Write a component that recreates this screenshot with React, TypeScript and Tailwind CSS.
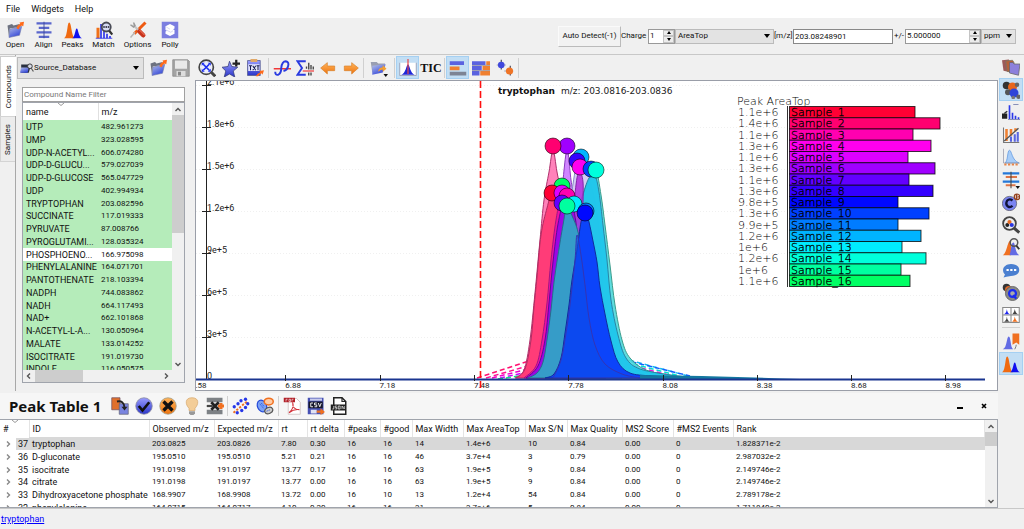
import { useState } from "react";
import type { ReactNode } from "react";
import clsx from "clsx";

const compounds = [
  ["UTP", "482.961273"],
  ["UMP", "323.028595"],
  ["UDP-N-ACETYL...", "606.074280"],
  ["UDP-D-GLUCU...", "579.027039"],
  ["UDP-D-GLUCOSE", "565.047729"],
  ["UDP", "402.994934"],
  ["TRYPTOPHAN", "203.082596"],
  ["SUCCINATE", "117.019333"],
  ["PYRUVATE", "87.008766"],
  ["PYROGLUTAMI...", "128.035324"],
  ["PHOSPHOENO...", "166.975098"],
  ["PHENYLALANINE", "164.071701"],
  ["PANTOTHENATE", "218.103394"],
  ["NADPH", "744.083862"],
  ["NADH", "664.117493"],
  ["NAD+", "662.101868"],
  ["N-ACETYL-L-A...", "130.050964"],
  ["MALATE", "133.014252"],
  ["ISOCITRATE", "191.019730"],
  ["INDOLE", "116.050575"],
];

const peakColumns = [
  { name: "#", width: "w-[29px]" },
  { name: "ID", width: "w-[120px]" },
  { name: "Observed m/z", width: "w-[65px]" },
  { name: "Expected m/z", width: "w-[64px]" },
  { name: "rt", width: "w-[29px]" },
  { name: "rt delta", width: "w-[37px]" },
  { name: "#peaks", width: "w-[36px]" },
  { name: "#good", width: "w-[32px]" },
  { name: "Max Width", width: "w-[51px]" },
  { name: "Max AreaTop", width: "w-[62px]" },
  { name: "Max S/N", width: "w-[42px]" },
  { name: "Max Quality", width: "w-[55px]" },
  { name: "MS2 Score", width: "w-[51px]" },
  { name: "#MS2 Events", width: "w-[60px]" },
  { name: "Rank", width: "" },
];

const peakRows = [
  ["37", "tryptophan", "203.0825", "203.0826", "7.80", "0.30", "16", "16", "14", "1.4e+6", "10", "0.84", "0.00", "0", "1.828371e-2"],
  ["36", "D-gluconate", "195.0510", "195.0510", "5.21", "0.21", "16", "16", "46", "3.7e+4", "3", "0.79", "0.00", "0", "2.987032e-2"],
  ["35", "isocitrate", "191.0198", "191.0197", "13.77", "0.17", "16", "16", "63", "1.9e+5", "9", "0.84", "0.00", "0", "2.149746e-2"],
  ["34", "citrate", "191.0198", "191.0197", "13.77", "0.00", "16", "16", "63", "1.9e+5", "9", "0.84", "0.00", "0", "2.149746e-2"],
  ["33", "Dihydroxyacetone phosphate", "168.9907", "168.9908", "13.72", "0.00", "16", "10", "13", "1.2e+4", "54", "0.84", "0.00", "0", "2.789178e-2"],
  ["32", "phenylalanine", "164.0715", "164.0717", "4.10", "0.20", "16", "16", "31", "3.7e+6", "5", "0.84", "0.00", "0", "1.711840e-2"],
];

const samples = [
  { area: "1.1e+6", end: 915, color: "#ff0034" },
  { area: "1.4e+6", end: 940, color: "#ff0070" },
  { area: "1.1e+6", end: 913, color: "#ff00b0" },
  { area: "1.3e+6", end: 931, color: "#ff00ee" },
  { area: "1.1e+6", end: 908, color: "#de00ff" },
  { area: "1.3e+6", end: 935, color: "#a000ff" },
  { area: "1.1e+6", end: 909, color: "#6400ff" },
  { area: "1.3e+6", end: 933, color: "#3400ff" },
  { area: "9.8e+5", end: 898, color: "#0008ff" },
  { area: "1.3e+6", end: 929, color: "#0040ff" },
  { area: "9.9e+5", end: 898, color: "#007cff" },
  { area: "1.2e+6", end: 921, color: "#00b4ff" },
  { area: "1e+6", end: 902, color: "#00ecff" },
  { area: "1.2e+6", end: 926, color: "#00ffdc" },
  { area: "1e+6", end: 901, color: "#00ffa0" },
  { area: "1.1e+6", end: 910, color: "#00ff64" },
];

/* ---------- icons ---------- */

function Icon({ children, size = "size-[18px]" }: { children: ReactNode; size?: string }) {
  return (
    <svg viewBox="0 0 24 24" className={clsx(size, "shrink-0")} fill="none" aria-hidden="true">
      {children}
    </svg>
  );
}

function Gradients() {
  return (
    <svg className="absolute size-0" aria-hidden="true">
      <defs>
        <linearGradient id="blue" x1="0" y1="0" x2="0" y2="1">
          <stop offset="0" stopColor="#9a9dff" />
          <stop offset="1" stopColor="#2a35c8" />
        </linearGradient>
        <linearGradient id="folder" x1="0" y1="0" x2="0.6" y2="1">
          <stop offset="0" stopColor="#b9c4ea" />
          <stop offset="1" stopColor="#3346d8" />
        </linearGradient>
        <linearGradient id="orange" x1="0" y1="0" x2="0" y2="1">
          <stop offset="0" stopColor="#ffb45a" />
          <stop offset="1" stopColor="#ee7410" />
        </linearGradient>
      </defs>
    </svg>
  );
}

const FolderOpen = () => (
  <>
    <path d="M2 6l6-2 2 2 8-2v4L5 10 4 21z" fill="#6d7280" />
    <path d="M5 11l16-4-3 12L4 22z" fill="url(#folder)" stroke="#7078a8" strokeWidth=".8" />
    <path d="M14 10q1-5 5-6l-1-2 6-1-1 6-2-1q-3 1-4 5z" fill="#ff6a1a" />
  </>
);

const Align = () => (
  <>
    <path d="M2 3h20M5 9h14M2 15h20M5 21h14" stroke="#5a66cc" strokeWidth="3" />
    <path d="M12 1v22" stroke="#3c4898" strokeWidth="1.2" />
  </>
);

const Peaks = () => (
  <>
    <path d="M0 23c5-2 4-21 7-21s3 20 8 21z" fill="#f06a10" />
    <path d="M11 23c4-2 4-13 6-13s2 11 7 13z" fill="#1010f0" />
  </>
);

const Match = () => (
  <>
    <path d="M2 23V9h4v14z" fill="#f07018" />
    <path d="M8 23V4M12 23V11M16 23v-6M20 23v-3" stroke="#1a22e8" strokeWidth="2" />
    <path d="M1 23h22" stroke="#1a22e8" />
    <circle cx="15" cy="8" r="6" fill="#d6dbf2" stroke="#484a55" strokeWidth="2.4" />
    <path d="M19 13l4 5" stroke="#333" strokeWidth="3" />
    <path d="M11 8h8" stroke="#445" strokeWidth="2.4" strokeDasharray="2 1" />
  </>
);

const Options = () => (
  <>
    <path d="M22 2L7 17" stroke="#ee5a12" strokeWidth="4" />
    <path d="M8 15l-6 7" stroke="#b8b8b8" strokeWidth="2" />
    <path d="M5 5l11 10" stroke="#c4c4c4" strokeWidth="3" />
    <path d="M2 5l4 3 2-2-2-4" stroke="#9a9a9a" strokeWidth="2" />
    <path d="M14 14l5 5" stroke="#c8331c" strokeWidth="6" strokeLinecap="round" />
    <path d="M14 12l7 7" stroke="#f58a70" strokeWidth="1.2" />
  </>
);

const Polly = () => (
  <>
    <path d="M1 1h22v22H1z" fill="#7b7ee0" />
    <path d="M12 4l6 3v3l-2 1 2 1v5l-6 3-6-3v-3l2-1-2-1V7z" fill="#fff" />
    <path d="M7 12l6 3 3-2M7 8l5 3" stroke="#c8c9f2" />
  </>
);

const Database = () => (
  <>
    <path d="M2 6h12l4 4-3 10H2z" fill="#29303f" />
    <path d="M2 11h13l-2 9H0z" fill="url(#folder)" />
    <circle cx="17" cy="9" r="4" fill="#d8dbe8" stroke="#333" strokeWidth="1.6" />
    <path d="M19 12l4 6" stroke="#555" strokeWidth="2" />
  </>
);

const Save = () => (
  <>
    <path d="M1 1h20l2 2v20H1z" fill="#a4a4a4" stroke="#888" />
    <path d="M4 2h16v11H4z" fill="#e9e9e9" />
    <path d="M6 16h12v7H6z" fill="#ddd" />
    <path d="M8 17h4v5H8z" fill="#888" />
  </>
);

const ZoomFit = () => (
  <>
    <circle cx="11" cy="11" r="9.500" fill="#eceefa" stroke="#444" strokeWidth="2.2" />
    <path d="M18 18l5 5" stroke="#444" strokeWidth="4" />
    <path d="M7 7l8 8M15 7l-8 8" stroke="#1a2cf0" strokeWidth="2.2" />
    <path d="M5 9V5h4zM13 5h4v4zM17 13v4h-4zM9 17H5v-4z" fill="#1a2cf0" />
  </>
);

const StarAdd = () => (
  <>
    <path d="M10 3l3 7 8 1-6 5 2 8-7-4-7 4 2-8-5-5 8-1z" fill="url(#blue)" stroke="#333a78" />
    <path d="M19 1v9M14 6h10" stroke="#222" strokeWidth="3" />
  </>
);

const CopyText = () => (
  <>
    <path d="M2 2h17v20H2z" fill="url(#blue)" stroke="#555b8c" />
    <path d="M6 0h9v4H6z" fill="#e0a868" />
    <path d="M3 7h15v9H3z" fill="#e8eafc" />
    <path d="M4 9h4M6 9v6M9 9l4 6M13 9l-4 6M14 9h4M16 9v6" stroke="#181c50" strokeWidth="1.4" />
    <path d="M13 23q2-4 6-5l-1-2 6-1-2 6-1-2q-3 1-5 4z" fill="#ff6a1a" />
  </>
);

const Smooth = () => (
  <>
    <path d="M1 13h23" stroke="#f03838" strokeWidth="2" />
    <path d="M3 17q0 5 4 4 4-2 4-9 1-9 6-9 5 1 3 7-1 5-6 6" stroke="#2a3be0" strokeWidth="2.6" />
  </>
);

const SumPeaks = () => (
  <>
    <path d="M13 3H2l6 9-6 9h11" stroke="#2a3be0" strokeWidth="2.6" />
    <path d="M9 16h15" stroke="#f03838" strokeWidth="1.6" />
    <path d="M14 13v-3M17 14V5M20 14V8M23 14V10M17 18v4M20 18v4" stroke="#444" strokeWidth="1.8" />
  </>
);

const ArrowLeft = () => <path d="M1 12l10-8v5h11v7H11v5z" fill="url(#orange)" stroke="#d88028" />;
const ArrowRight = () => <path d="M23 12L13 4v5H2v7h11v5z" fill="url(#orange)" stroke="#d88028" />;

const Export = () => (
  <>
    <path d="M1 4h8l2 2h9v5L3 18z" fill="#9a9fb2" />
    <path d="M3 9l18-2-4 11-14 3z" fill="url(#folder)" />
    <path d="M11 17q0-5 6-6V8l5 5-5 4v-3q-3 0-6 3z" fill="#f5a030" />
    <path d="M18 20h6l-3 4z" fill="#111" />
  </>
);

const IsotopePlot = () => (
  <>
    <path d="M1 5h22v17H1z" fill="#fff" />
    <path d="M3 21c6-1 7-14 9-14s3 13 9 14z" fill="#1f28d8" />
    <path d="M12 0v20" stroke="#e84848" strokeWidth="1.6" />
    <path d="M1 5v17h22V5" stroke="#8a8fa8" />
  </>
);

const BarBlocks = () => (
  <>
    <path d="M1 3h19v5H1z" fill="#5a62e0" />
    <path d="M1 10h13v5H1z" fill="#f08030" />
    <path d="M1 17h22v5H1z" fill="#7d8494" />
  </>
);

const StackBlocks = () => (
  <>
    <path d="M0 3h18v5H0zM0 9h13v6H0zM0 16h10v6H0z" fill="#5a62e0" />
    <path d="M19 3h5v5h-5zM14 9h10v6H14zM11 16h13v6H11z" fill="#f08030" />
    <path d="M0 8.500h24M0 15.500h24" stroke="#8a8a98" />
  </>
);

const Scatter = () => (
  <>
    <path d="M7 1v13M19 9v13" stroke="#334" strokeWidth="1.4" />
    <path d="M1 8h12M11 16h12" stroke="#889" strokeWidth="1" />
    <circle cx="7" cy="8" r="4.4" fill="#4048dd" />
    <circle cx="18" cy="16" r="4.8" fill="#ef7426" />
  </>
);

const Projects = () => (
  <>
    <path d="M0 3l9-1 2 3v14l-9-2z" fill="#9c5a58" />
    <path d="M5 4l9-1 2 3v13l-9-1z" fill="#b86038" stroke="#776" />
    <path d="M10 6h5l1 2h8l-2 15-12-3z" fill="#8c80dc" stroke="#666" />
  </>
);

const Molecules = () => (
  <>
    <circle cx="6" cy="6" r="5" fill="#333" />
    <circle cx="14" cy="8" r="6" fill="#e8661c" />
    <circle cx="20" cy="5" r="3" fill="#666" />
    <circle cx="8" cy="15" r="4" fill="#555" />
    <circle cx="16" cy="16" r="6" fill="#2f45d8" />
    <circle cx="22" cy="21" r="3" fill="#666" />
    <circle cx="15" cy="22" r="2.4" fill="#777" />
  </>
);

const Spectrum = () => (
  <>
    <path d="M10 22V3M14 22v-9M18 22v-5M22 22v-3" stroke="#2a38e8" strokeWidth="2.2" />
    <path d="M0 14h7v7H0z" fill="#222" />
    <path d="M3 14l4-3" stroke="#333" strokeWidth="2" />
    <path d="M15 2h7M8 22h16" stroke="#8890b8" strokeWidth="1.4" />
  </>
);

const Calibration = () => (
  <>
    <path d="M2 2v20h21" stroke="#777" strokeWidth="1.4" />
    <path d="M6 4v16M12 4v9M18 3v4" stroke="#f08030" strokeWidth="3.4" />
    <path d="M12 14v7M17 11v10M21 8v13" stroke="#5a66e0" strokeWidth="2.8" />
    <path d="M3 20L22 3" stroke="#555" strokeWidth="1.8" />
  </>
);

const Gauss = () => (
  <>
    <path d="M4 20C8 18 7 3 10 3s3 14 13 17z" fill="#a8cdf8" stroke="#5f98e0" />
    <path d="M2 1v19h21" stroke="#99a" />
    <path d="M3 22h20" stroke="#e8864a" strokeWidth="2.4" strokeDasharray="3 2" />
  </>
);

const AlignRows = () => (
  <>
    <path d="M1 3h22M1 14h22" stroke="#2578d8" strokeWidth="3" />
    <path d="M5 8h15M5 19h13" stroke="#dd7548" strokeWidth="2.6" />
    <path d="M12 1v22" stroke="#444" strokeWidth="1.4" />
    <path d="M18 20h6l-3 4z" fill="#111" />
  </>
);

const Carbon = () => (
  <>
    <circle cx="10" cy="14" r="9.500" fill="#7a84f2" stroke="#556" />
    <path d="M14 10q-4-3-7 0-3 5 1 8 3 2 6-1" stroke="#10133a" strokeWidth="3.2" />
    <circle cx="20" cy="5" r="4.5" fill="#94401c" />
    <path d="M18 3v4M20 3h2l-1 2 1 2h-2" stroke="#fff" strokeWidth=".9" />
  </>
);

const SearchPeaks = () => (
  <>
    <circle cx="10" cy="10" r="8.500" fill="#eee" stroke="#444" strokeWidth="2.4" />
    <path d="M16 16l7 6" stroke="#444" strokeWidth="4" />
    <circle cx="7" cy="12" r="2.6" fill="#222" />
    <circle cx="10" cy="8" r="2.8" fill="#e86a20" />
    <circle cx="13" cy="12" r="2.8" fill="#2a36e0" />
  </>
);

const PeakSearch = () => (
  <>
    <path d="M1 23C7 20 7 3 12 3v20z" fill="#f07020" />
    <path d="M10 23c2-4 2-17 5-17s2 14 8 17z" fill="#626be4" />
    <circle cx="16" cy="6" r="5" stroke="#555" strokeWidth="2" />
    <path d="M19 10l4 5" stroke="#333" strokeWidth="2.6" />
  </>
);

const Chat = () => (
  <>
    <path d="M12 4c7 0 11 3 11 8s-5 8-11 8l-6 1-4 1 2-4C-2 12 3 4 12 4z" fill="#4a7fd0" />
    <path d="M6 12h3M11 12h3M16 12h3" stroke="#fff" strokeWidth="2.4" />
  </>
);

const Quantum = () => (
  <>
    <circle cx="6" cy="6" r="5" fill="#333" />
    <circle cx="9" cy="9" r="5" fill="#dd6828" />
    <circle cx="14" cy="14" r="9.4" fill="#888" stroke="#555" />
    <circle cx="14" cy="14" r="4.6" stroke="#1c2cf0" strokeWidth="3" fill="#aaa" />
    <path d="M15 16l4 5" stroke="#1c2cf0" strokeWidth="3" />
  </>
);

const PeakGrid = () => (
  <>
    <path d="M1 2h22v20H1zM12 2v20M1 12h22" stroke="#888" strokeWidth="1.4" fill="#fff" />
    <path d="M2 11q4-1 4.500-7Q7 10 11 11z" fill="#2028f0" />
    <path d="M13 11q3-1 4-7 1 6 5 7zM2 21q4-1 4.500-7Q7 20 11 21z" fill="#444" />
    <path d="M13 21q3-1 4-7 1 6 5 7z" fill="#f07020" />
  </>
);

const PeakMark = () => (
  <>
    <path d="M1 23c6-2 5-17 8-17s2 15 6 17z" fill="#626be4" />
    <path d="M14 2h9v15l-4-3-5 3z" fill="#f07020" />
    <path d="M17 23q2-4 2-6" stroke="#555" />
  </>
);

const MovePeak = () => (
  <>
    <path d="M1 1h11v16H1z" fill="#e0702c" stroke="#705060" />
    <path d="M11 9h12v14H11z" fill="#7a85e0" stroke="#667" />
    <path d="M8 6q9-2 10 8" stroke="#222" strokeWidth="2.4" />
    <path d="M14 13h8l-4 5z" fill="#222" />
  </>
);

const Good = () => (
  <>
    <circle cx="12" cy="12" r="11" fill="url(#blue)" stroke="#889" />
    <path d="M5 12l5 6 9-11" stroke="#111" strokeWidth="3.6" />
  </>
);

const Bad = () => (
  <>
    <circle cx="12" cy="12" r="11" fill="url(#orange)" stroke="#998" />
    <path d="M6 6l12 12M18 6L6 18" stroke="#111" strokeWidth="4.4" />
  </>
);

const Bulb = () => (
  <>
    <path d="M12 1c-10 0-9 9-4 14v3h8v-3c5-5 6-14-4-14z" fill="#f3cd98" stroke="#d8ab72" />
    <path d="M8 19h8v3l-2 2h-4l-2-2z" fill="#999" />
  </>
);

const DeletePeak = () => (
  <>
    <path d="M1 1h21v6H1zM1 17h21v6H1z" fill="#7d8185" />
    <path d="M1 12h8" stroke="#444" strokeWidth="3" />
    <path d="M16 12h8M20 8v8" stroke="#f07020" strokeWidth="4" />
    <path d="M7 7l10 10M17 7L7 17" stroke="#222" strokeWidth="3.6" />
  </>
);

const ScatterBlue = () => (
  <>
    <path d="M2 21L20 6" stroke="#f07020" strokeWidth="2.600" strokeDasharray="3 2" />
    <g fill="#2636e8">
      <circle cx="3" cy="13" r="2.200" />
      <circle cx="8" cy="9" r="2.200" />
      <circle cx="12" cy="5" r="2.200" />
      <circle cx="18" cy="3" r="2.200" />
      <circle cx="21" cy="9" r="2.200" />
      <circle cx="18" cy="14" r="2.200" />
      <circle cx="13" cy="18" r="2.200" />
      <circle cx="7" cy="21" r="2.200" />
    </g>
  </>
);

const Clusters = () => (
  <>
    <ellipse cx="8" cy="12" rx="6" ry="8" transform="rotate(-25 8 12)" fill="#7ca2f4" stroke="#2348d8" strokeWidth="1.6" />
    <ellipse cx="17" cy="6" rx="6" ry="4.500" fill="#ffcba4" stroke="#f07020" strokeWidth="2" />
    <ellipse cx="17" cy="18" rx="5.500" ry="4" transform="rotate(-25 17 18)" fill="#ccc" stroke="#555" strokeWidth="1.6" />
    <path d="M5 9l5 6M7 8l4 5M14 19l5-2" stroke="#2348d8" strokeDasharray="2 1" />
  </>
);

const Pdf = () => (
  <>
    <path d="M7 2h11l5 5v16H7z" fill="#fff" stroke="#c8b8b8" />
    <path d="M1 1h15v6H1z" fill="#b22028" />
    <path d="M4 3v3M4 3h2M8 3v3h2V3zM12 3v3M12 3h2" stroke="#fff" strokeWidth=".8" />
    <path d="M8 21c4-3 7-9 5-13-1 6 4 9 9 9-5-1-10 1-14 4z" stroke="#d4323a" strokeWidth="1.4" />
  </>
);

const Csv = () => (
  <>
    <path d="M1 1h21v22H1z" fill="#4650b4" />
    <path d="M4 2h16v3H4z" fill="#c9ccec" />
    <path d="M2 6h19v9H2z" fill="#16182c" />
    <path d="M8 8H5v5h3M13 8h-3v2.500h3V13h-3M15 8l2 5 2-5" stroke="#fff" strokeWidth="1.2" />
    <path d="M5 17h8v5H5z" fill="#dfe1f4" />
    <path d="M13 18h5v-3l6 5-6 4v-3h-5z" fill="#f07020" />
  </>
);

const Json = () => (
  <>
    <path d="M5 1h11l5 5v17H5z" fill="#fff" stroke="#222" strokeWidth="2" />
    <path d="M16 1v5h5" stroke="#222" strokeWidth="1.6" />
    <path d="M1 10h20v8H1z" fill="#222" />
    <path d="M5 12v4H3M9 12H7v2h2v2H7M11 12h2.500v4H11zM16 16v-4l3 4v-4" stroke="#fff" strokeWidth=".9" />
  </>
);

/* ---------- small controls ---------- */

function ToolButton({ label, width = "w-6", active, children }: { label: string; width?: string; active?: boolean; children: ReactNode }) {
  return (
    <button
      aria-label={label}
      className={clsx(
        "flex h-[23px] shrink-0 items-center justify-center border",
        width,
        active ? "border-[#a5d0f2] bg-[#c2def4]" : "border-transparent"
      )}
    >
      {children}
    </button>
  );
}

function Divider() {
  return <span className="mx-px h-5 w-px shrink-0 bg-[#d0d0d0]" />;
}

function Caret() {
  return (
    <svg viewBox="0 0 6 4" className="pointer-events-none absolute right-1 top-1/2 h-1 w-1.5 -translate-y-1/2">
      <path d="M0 0h6L3 4z" fill="#000" />
    </svg>
  );
}

function Spinner() {
  return (
    <span className="flex w-[11px] flex-col bg-[#ececec]">
      <button aria-label="Increase" className="flex flex-1 items-center justify-center border border-[#c4c4c4]">
        <svg viewBox="0 0 4 3" className="h-[3px] w-1"><path d="M0 3h4L2 0z" /></svg>
      </button>
      <button aria-label="Decrease" className="flex flex-1 items-center justify-center border border-[#c4c4c4]">
        <svg viewBox="0 0 4 3" className="h-[3px] w-1"><path d="M0 0h4L2 3z" /></svg>
      </button>
    </span>
  );
}

function Chevron({ d, color = "#555" }: { d: string; color?: string }) {
  return (
    <svg viewBox="0 0 12 12" className="size-3 shrink-0" fill="none">
      <path d={d} stroke={color} strokeWidth="1.4" />
    </svg>
  );
}

const UP = "M3.500 8L6 5.500 8.500 8";
const DOWN = "M3.500 5L6 7.500 8.500 5";
const LEFT = "M7 3.500L4.500 6 7 8.500";
const RIGHT = "M5 3.500L7.500 6 5 8.500";

/* ---------- chromatogram ---------- */

type Point = [number, number];

// Catmull-Rom spline through the points
function curve(points: Point[]) {
  let d = `M${points[0][0]} ${points[0][1]}`;
  for (let i = 0; i < points.length - 1; i++) {
    const p0 = points[i - 1] ?? points[i];
    const p1 = points[i];
    const p2 = points[i + 1];
    const p3 = points[i + 2] ?? p2;
    d += `C${p1[0] + (p2[0] - p0[0]) / 6} ${p1[1] + (p2[1] - p0[1]) / 6} ${p2[0] - (p3[0] - p1[0]) / 6} ${p2[1] - (p3[1] - p1[1]) / 6} ${p2[0]} ${p2[1]}`;
  }
  return d + "Z";
}

const eics: { fill: string; stroke: string; opacity: number; points: Point[] }[] = [
  { fill: "#ff4d9c", stroke: "#b0306c", opacity: 0.7, points: [[515, 378], [524, 370], [530, 340], [535, 293], [540, 240], [544, 200], [549, 172], [553, 150], [557, 172], [562, 200], [567, 260], [575, 330], [590, 378]] },
  { fill: "#c466ff", stroke: "#8c3cc0", opacity: 0.8, points: [[530, 378], [541, 360], [550, 310], [557, 240], [562, 190], [567, 150], [571, 180], [574, 200], [580, 260], [590, 340], [606, 378]] },
  { fill: "#c8c0f0", stroke: "#8888c8", opacity: 0.8, points: [[555, 300], [568, 210], [572, 190], [577, 163], [583, 163], [590, 180], [600, 240], [606, 378]] },
  { fill: "#4cd8dc", stroke: "#3c9c8c", opacity: 0.9, points: [[566, 378], [574, 260], [580, 205], [590, 178], [596, 170], [601, 195], [605, 225], [610, 265], [615, 305], [622, 340], [630, 358], [646, 370], [670, 375], [700, 378]] },
  { fill: "#1cc4ec", stroke: "#2a84a4", opacity: 0.9, points: [[560, 378], [570, 290], [576, 225], [583, 195], [589, 178], [595, 176], [599, 192], [603, 225], [607, 260], [611, 300], [618, 335], [626, 358], [640, 369], [670, 375], [690, 378]] },
  { fill: "#b428dc", stroke: "#8424a8", opacity: 0.85, points: [[545, 378], [556, 320], [567, 240], [574, 200], [578, 174], [583, 182], [583, 230], [588, 300], [600, 378]] },
  { fill: "#ff3c78", stroke: "#b02c60", opacity: 1, points: [[516, 378], [525, 369], [531, 340], [534, 307], [537, 277], [541, 235], [547, 208], [552, 194], [558, 202], [562, 240], [568, 300], [580, 378]] },
  { fill: "#f00ea4", stroke: "#a01484", opacity: 1, points: [[524, 378], [536, 366], [542, 340], [547, 303], [551, 260], [556, 220], [562, 194], [567, 220], [570, 300], [576, 378]] },
  { fill: "#9c06e4", stroke: "#5c0c98", opacity: 1, points: [[526, 378], [538, 366], [545, 340], [549, 303], [553, 262], [558, 224], [564, 202], [572, 203], [578, 240], [582, 300], [592, 345], [606, 378]] },
  { fill: "#369cc8", stroke: "#24708c", opacity: 1, points: [[528, 378], [537, 373], [543, 362], [547, 340], [551, 310], [554, 282], [558, 255], [563, 225], [567, 207], [573, 218], [578, 232], [583, 258], [588, 300], [594, 340], [606, 368], [622, 378]] },
  { fill: "#0c44fa", stroke: "#102c9c", opacity: 1, points: [[545, 378], [554, 374], [561, 358], [565, 333], [569, 305], [572, 280], [577, 250], [581, 222], [585, 208], [589, 222], [593, 241], [597, 262], [600, 287], [605, 314], [611, 341], [618, 362], [630, 373], [653, 376], [700, 378]] },
  { fill: "#0e4ce8", stroke: "#3434b4", opacity: 0.6, points: [[553, 378], [561, 360], [566, 333], [570, 305], [575, 260], [577, 235], [581, 255], [585, 285], [589, 318], [595, 345], [605, 364], [622, 374], [640, 378]] },
];

// x, y, sample index, back to front
const markers: [number, number, number][] = [
  [567, 146, 5],
  [553, 146, 1],
  [581, 157, 11],
  [577, 161, 7],
  [580, 167, 3],
  [591, 169, 9],
  [596, 170, 13],
  [562, 186, 15],
  [552, 193, 0],
  [562, 193, 4],
  [567, 196, 2],
  [562, 203, 6],
  [574, 204, 12],
  [567, 206, 14],
  [586, 211, 10],
  [585, 213, 8],
];

const yTicks = [
  { y: 85, label: "2.1e+6" },
  { y: 127, label: "1.8e+6" },
  { y: 169, label: "1.5e+6" },
  { y: 211, label: "1.2e+6" },
  { y: 253, label: "9e+5" },
  { y: 295, label: "6e+5" },
  { y: 337, label: "3e+5" },
  { y: 379, label: "0" },
];

const xTicks = ["6.58", "6.88", "7.18", "7.48", "7.78", "8.08", "8.38", "8.68", "8.98"];

const tails = [
  { d: "M477 378L535 359", color: "#ff1070" },
  { d: "M486 378L538 363", color: "#ff1090" },
  { d: "M492 378L540 366", color: "#f000c8" },
  { d: "M500 378L542 369", color: "#d000ff" },
  { d: "M498 379L548 372", color: "#10e080" },
  { d: "M606 354L692 377", color: "#10b8f0" },
  { d: "M616 358L690 376", color: "#1060ff" },
  { d: "M610 358L680 376", color: "#00e0d0" },
  { d: "M618 362L676 377", color: "#e018e0" },
  { d: "M620 366L668 377", color: "#3858ff" },
];

function Chromatogram() {
  return (
    <svg viewBox="196 81 801 309" preserveAspectRatio="xMinYMin meet" className="h-full w-full">
      {tails.map((t) => (
        <path key={t.d} d={t.d} stroke={t.color} strokeWidth="1.500" strokeDasharray="5 3" fill="none" />
      ))}
      {yTicks.map((t) => (
        <g key={t.label}>
          <path d={`M196 ${t.y + 0.5}H985`} stroke="#f0f0f0" strokeDasharray="1 2" />
          <path d={`M202 ${t.y + 0.5}h9`} stroke="#222" />
          <text x="207" y={t.y} className="font-[Roboto] text-[9px]" fill="#222">{t.label}</text>
        </g>
      ))}
      <path d="M206.500 81V379" stroke="#222" />
      {eics.map((e, i) => (
        <path key={i} d={curve(e.points)} fill={e.fill} fillOpacity={e.opacity} stroke={e.stroke} strokeWidth="1" />
      ))}
      <path d="M640 375Q720 376 800 379H640z" fill="#1478a0" />
      <path d="M196 379.500H985" stroke="#1a3590" strokeWidth="2" />
      {xTicks.map((label, i) => (
        <g key={label}>
          {i > 0 && <path d={`M${Math.round(191 + i * 94.3) + 0.5} 375v6`} stroke="#222" />}
          <text x={191 + i * 94.3} y="388" className="font-[Roboto] text-[8px]" fill="#222">{label}</text>
        </g>
      ))}
      <path d="M480.500 81V388" stroke="#ff1010" strokeWidth="1.600" strokeDasharray="7 3" />
      {markers.map(([x, y, s]) => (
        <circle key={s} cx={x} cy={y} r="8" fill={samples[s].color} stroke="#000" strokeOpacity=".55" />
      ))}
      <text x="498" y="94" className="font-['DejaVu_Sans'] text-[9px] font-bold" fill="#111">tryptophan</text>
      <text x="561" y="94" className="font-['DejaVu_Sans'] text-[9px]" fill="#222">m/z: 203.0816-203.0836</text>
      <text x="737" y="105" className="font-['DejaVu_Sans'] text-[11px] font-extralight" fill="#000">Peak AreaTop</text>
      {samples.map((s, i) => (
        <g key={i} className="font-['DejaVu_Sans'] text-[11px] font-extralight" fill="#000">
          <rect x="789.500" y={106.5 + i * 11.25} width={s.end - 789.5} height="11.250" fill={s.color} stroke="#000" strokeOpacity=".75" />
          <text x="738" y={116 + i * 11.25}>{s.area}</text>
          <text x="791" y={116 + i * 11.25} stroke="#000" strokeWidth=".3">{`Sample_${i + 1}`}</text>
        </g>
      ))}
      <path d="M787.500 106V287" stroke="#333" />
    </svg>
  );
}

/* ---------- panels ---------- */

function MainToolbar() {
  const [mz, setMz] = useState("203.08248901");
  const [ppm, setPpm] = useState("5.000000");
  const [charge, setCharge] = useState("1");
  const actions = [
    { label: "Open", width: "w-[30px]", icon: <FolderOpen /> },
    { label: "Align", width: "w-[27px]", icon: <Align /> },
    { label: "Peaks", width: "w-[31px]", icon: <Peaks /> },
    { label: "Match", width: "w-[31px]", icon: <Match /> },
    { label: "Options", width: "w-[37px]", icon: <Options /> },
    { label: "Polly", width: "w-[28px]", icon: <Polly /> },
  ];
  return (
    <div className="flex h-[37px] items-center justify-between border-b border-[#c8c8c8] bg-[#f0f0f0] pr-2">
      <div className="flex">
        {actions.map((a) => (
          <button key={a.label} className={clsx("flex flex-col items-center leading-[12px]", a.width)}>
            <Icon>{a.icon}</Icon>
            {a.label}
          </button>
        ))}
      </div>
      <div className="flex items-center">
        <button className="h-[21px] w-[63px] border border-[#fafafa] border-r-[#bbb] border-b-[#bbb] bg-[#f2f2f2]">Auto Detect(-1)</button>
        <label htmlFor="charge" className="w-[27px]">Charge</label>
        <div className="flex h-[15px] w-[27px] border border-[#999] bg-white">
          <input id="charge" value={charge} onChange={(e) => setCharge(e.target.value)} className="min-w-0 flex-1 pl-px" />
          <Spinner />
        </div>
        <div className="relative flex">
          <select aria-label="Quant type" className="h-[15px] w-[99px] appearance-none border border-[#bbb] bg-[#e3e3e3] pl-0.5">
            <option>AreaTop</option>
          </select>
          <Caret />
        </div>
        <label htmlFor="mz" className="w-[19px]">[m/z]</label>
        <input id="mz" value={mz} onChange={(e) => setMz(e.target.value)} className="h-[15px] w-[100px] border border-[#888] bg-white pl-px" />
        <label htmlFor="ppm" className="w-3 text-center">+/-</label>
        <div className="flex h-[15px] w-[76px] border border-[#999] bg-white">
          <input id="ppm" value={ppm} onChange={(e) => setPpm(e.target.value)} className="min-w-0 flex-1 pl-px" />
          <Spinner />
        </div>
        <div className="relative flex">
          <select aria-label="Unit" className="h-[15px] w-[35px] appearance-none border border-[#bbb] bg-[#e3e3e3] pl-0.5">
            <option>ppm</option>
          </select>
          <Caret />
        </div>
      </div>
    </div>
  );
}

function CompoundsPanel() {
  const [filter, setFilter] = useState("");
  return (
    <div className="flex w-[195px] shrink-0">
      <div className="flex w-4 flex-col border-r border-[#a8a8a8] pt-px">
        <button className="h-[60px] w-4 border-t border-l border-[#ccc] bg-white [writing-mode:vertical-rl]">
          <span className="inline-block rotate-180">Compounds</span>
        </button>
        <button className="h-[46px] border border-r-0 border-[#d4d4d4] bg-[#ececec] [writing-mode:vertical-rl]">
          <span className="inline-block rotate-180">Samples</span>
        </button>
      </div>
      <div className="flex min-w-0 flex-1 flex-col pt-0.5">
        <div className="flex items-center gap-[5px] pl-px">
          <div className="relative flex h-[22px] w-[127px] items-center border border-[#bbb] bg-[#e2e2e2]">
            <span className="pointer-events-none absolute left-0.5"><Icon size="size-[14px]"><Database /></Icon></span>
            <select aria-label="Database" className="h-full w-full appearance-none pl-4">
              <option>Source_Database</option>
            </select>
            <Caret />
          </div>
          <button aria-label="Load compounds"><Icon><FolderOpen /></Icon></button>
          <button aria-label="Save compounds"><Icon><Save /></Icon></button>
        </div>
        <input
          aria-label="Compound Name Filter"
          placeholder="Compound Name Filter"
          value={filter}
          onChange={(e) => setFilter(e.target.value)}
          className="mt-2 mr-2.5 ml-1.5 h-[15px] shrink-0 border border-[#a0a0a0] bg-white pl-px placeholder:text-[#777]"
        />
        <div className="mr-2.5 mb-2 ml-1.5 flex min-h-0 flex-1 border border-[#a0a4ac] bg-white">
          <div className="flex min-w-0 flex-1 flex-col">
            <div className="relative min-h-0 flex-1 overflow-hidden">
              <table className="w-full table-fixed text-[9px] leading-[12px]">
                <thead>
                  <tr className="h-[17px] text-left">
                    <th className="w-[75px] border-r border-[#e0e0e0] pl-[3px] font-normal">name</th>
                    <th className="pl-[3px] font-normal">m/z</th>
                  </tr>
                </thead>
                <tbody>
                  {compounds.map(([name, mz]) => (
                    <tr key={name} className={clsx("h-[13px] nth-[4n]:h-3", name !== "PHOSPHOENO..." && "bg-[#b5ecba]")}>
                      <td className="whitespace-nowrap p-0 pl-[3px]">{name}</td>
                      <td className="p-0 pl-[3px] text-[8px]">{mz}</td>
                    </tr>
                  ))}
                </tbody>
              </table>
              <svg viewBox="0 0 6 3" className="absolute top-0 left-[35px] h-[3px] w-1.5" fill="none"><path d="M0 0l3 2.500L6 0" stroke="#999" /></svg>
            </div>
            <div className="flex h-3 items-center bg-[#f0f0f0]">
              <Chevron d={LEFT} />
              <span className="h-full w-12 bg-[#cdcdcd]" />
              <span className="flex-1" />
              <Chevron d={RIGHT} />
            </div>
          </div>
          <div className="flex w-3 flex-col bg-[#f0f0f0]">
            <Chevron d={UP} />
            <span className="h-[118px] bg-[#cdcdcd]" />
            <span className="flex-1" />
            <Chevron d={DOWN} />
            <span className="h-3" />
          </div>
        </div>
      </div>
    </div>
  );
}

function PlotPanel() {
  return (
    <div className="flex min-w-0 flex-1 flex-col">
      <div className="flex h-[25px] shrink-0 items-center">
        <ToolButton label="Reset zoom"><Icon><ZoomFit /></Icon></ToolButton>
        <ToolButton label="Bookmark"><Icon><StarAdd /></Icon></ToolButton>
        <ToolButton label="Copy as text"><Icon><CopyText /></Icon></ToolButton>
        <Divider />
        <ToolButton label="Smooth" width="w-[23px]"><Icon><Smooth /></Icon></ToolButton>
        <ToolButton label="Integrate" width="w-[23px]"><Icon><SumPeaks /></Icon></ToolButton>
        <ToolButton label="Previous" width="w-[23px]"><Icon size="size-4"><ArrowLeft /></Icon></ToolButton>
        <ToolButton label="Next" width="w-[23px]"><Icon size="size-4"><ArrowRight /></Icon></ToolButton>
        <Divider />
        <ToolButton label="Export" width="w-[28px]"><Icon><Export /></Icon></ToolButton>
        <Divider />
        <ToolButton label="Show isotope plot" width="w-[23px]" active><Icon><IsotopePlot /></Icon></ToolButton>
        <ToolButton label="Show TIC" width="w-[24px]"><span className="font-['Liberation_Serif'] text-xs font-bold">TIC</span></ToolButton>
        <Divider />
        <ToolButton label="Show bar plot" width="w-[23px]" active><Icon><BarBlocks /></Icon></ToolButton>
        <ToolButton label="Show isotope bars" width="w-[23px]"><Icon><StackBlocks /></Icon></ToolButton>
        <ToolButton label="Show box plot" width="w-[25px]"><Icon><Scatter /></Icon></ToolButton>
        <Divider />
      </div>
      <div className="min-h-0 flex-1 overflow-hidden border border-[#9a9ea8] bg-white">
        <Chromatogram />
      </div>
    </div>
  );
}

function PeakTable() {
  return (
    <section className="h-[117px] shrink-0 pt-0.5">
      <header className="flex h-[26px] items-center bg-[#f6f6f6] pl-[9px]">
        <h2 className="w-[99px] font-['Noto_Sans'] text-[15px] font-bold">Peak Table 1</h2>
        <div className="flex flex-1 items-center">
          <ToolButton label="Switch group"><Icon><MovePeak /></Icon></ToolButton>
          <ToolButton label="Mark good"><Icon><Good /></Icon></ToolButton>
          <ToolButton label="Mark bad"><Icon><Bad /></Icon></ToolButton>
          <ToolButton label="Unmark" width="w-[23px]"><Icon><Bulb /></Icon></ToolButton>
          <ToolButton label="Delete group" width="w-[23px]"><Icon><DeletePeak /></Icon></ToolButton>
          <Divider />
          <ToolButton label="Scatter plot"><Icon><ScatterBlue /></Icon></ToolButton>
          <ToolButton label="Cluster"><Icon><Clusters /></Icon></ToolButton>
          <Divider />
          <ToolButton label="Export PDF"><Icon><Pdf /></Icon></ToolButton>
          <ToolButton label="Export CSV" width="w-[23px]"><Icon><Csv /></Icon></ToolButton>
          <ToolButton label="Export JSON" width="w-[23px]"><Icon><Json /></Icon></ToolButton>
        </div>
        <button aria-label="Minimize" className="flex h-6 w-6 items-center justify-center">
          <svg viewBox="0 0 6 6" className="size-1.5"><path d="M0 4h6v2H0z" /></svg>
        </button>
        <button aria-label="Close" className="mr-0.5 flex h-6 w-6 items-center justify-center">
          <svg viewBox="0 0 6 6" className="size-1.5"><path d="M1 1l4 4M5 1L1 5" stroke="#000" strokeWidth="1.600" /></svg>
        </button>
      </header>
      <div className="flex h-[89px] border border-[#a0a4ac] border-l-0 bg-white">
        <div className="relative min-w-0 flex-1 overflow-hidden">
          <table className="w-full table-fixed text-[9px] leading-[12px]">
            <thead>
              <tr className="h-[17px] text-left">
                {peakColumns.map((c) => (
                  <th key={c.name} className={clsx("border-r border-[#e4e4e4] p-0 pl-[3px] font-normal whitespace-nowrap", c.width)}>{c.name}</th>
                ))}
              </tr>
            </thead>
            <tbody>
              {peakRows.map((row, r) => (
                <tr key={row[0]} className="h-[13px] nth-[4n]:h-3">
                  {row.map((cell, i) =>
                    i === 0 ? (
                      <td key={i} className="p-0">
                        <div className="flex h-3 items-center">
                          <span className="w-4 pl-0.5"><Chevron d={RIGHT} color="#888" /></span>
                          <span className={clsx("flex-1 pl-0.5", r === 0 && "bg-[#d8d8d8]")}>{cell}</span>
                        </div>
                      </td>
                    ) : (
                      <td key={i} className={clsx("p-0 pl-[3px] whitespace-nowrap", i > 1 && "text-[8px]", r === 0 && "bg-[#d8d8d8]")}>{cell}</td>
                    )
                  )}
                </tr>
              ))}
            </tbody>
          </table>
          <svg viewBox="0 0 6 3" className="absolute top-0 left-3 h-[3px] w-1.5" fill="none"><path d="M0 0l3 2.500L6 0" stroke="#999" /></svg>
        </div>
        <div className="flex w-3 flex-col bg-[#f0f0f0]">
          <Chevron d={UP} />
          <span className="h-3.5 bg-[#cdcdcd]" />
          <span className="flex-1" />
          <Chevron d={DOWN} />
        </div>
      </div>
    </section>
  );
}

function SideToolbar() {
  const tools = [
    { label: "Projects", icon: <Projects /> },
    { label: "Compounds", icon: <Molecules />, active: true },
    { label: "Spectra", icon: <Spectrum /> },
    { label: "Calibration", icon: <Calibration /> },
    { label: "Isotopes", icon: <Gauss /> },
    { label: "Alignment", icon: <AlignRows /> },
    { label: "Carbon labels", icon: <Carbon /> },
    { label: "Search", icon: <SearchPeaks /> },
    { label: "Peak search", icon: <PeakSearch /> },
    { label: "Notes", icon: <Chat /> },
    { label: "Quantify", icon: <Quantum /> },
    { label: "Gallery", icon: <PeakGrid /> },
  ];
  return (
    <aside className="flex w-[26px] shrink-0 flex-col items-center pt-px">
      <div className="grid h-[270px] grid-rows-12 items-center">
        {tools.map((t) => (
          <ToolButton key={t.label} label={t.label} active={t.active}><Icon>{t.icon}</Icon></ToolButton>
        ))}
      </div>
      <span className="my-px h-px w-[18px] bg-[#d0d0d0]" />
      <ToolButton label="Bookmarks"><Icon><PeakMark /></Icon></ToolButton>
      <ToolButton label="Peak tables" active><Icon><Peaks /></Icon></ToolButton>
    </aside>
  );
}

export default function App() {
  return (
    <div className="flex h-screen flex-col overflow-hidden bg-[#f0f0f0] font-[Roboto,sans-serif] text-[8px] leading-[12px] text-[#111]">
      <Gradients />
      <nav className="flex h-[18px] shrink-0 items-center gap-[11px] bg-white pl-1.5 text-[9px]">
        <button>File</button>
        <button>Widgets</button>
        <button>Help</button>
      </nav>
      <MainToolbar />
      <div className="flex min-h-0 flex-1">
        <div className="flex min-w-0 flex-1 flex-col">
          <main className="flex min-h-0 flex-1">
            <CompoundsPanel />
            <PlotPanel />
          </main>
          <PeakTable />
        </div>
        <SideToolbar />
      </div>
      <footer className="flex h-[21px] shrink-0 items-center border-t border-[#c8c8c8] pl-px text-[9px]">
        <a href="#tryptophan" className="text-[#0000ff] underline">tryptophan</a>
      </footer>
    </div>
  );
}
